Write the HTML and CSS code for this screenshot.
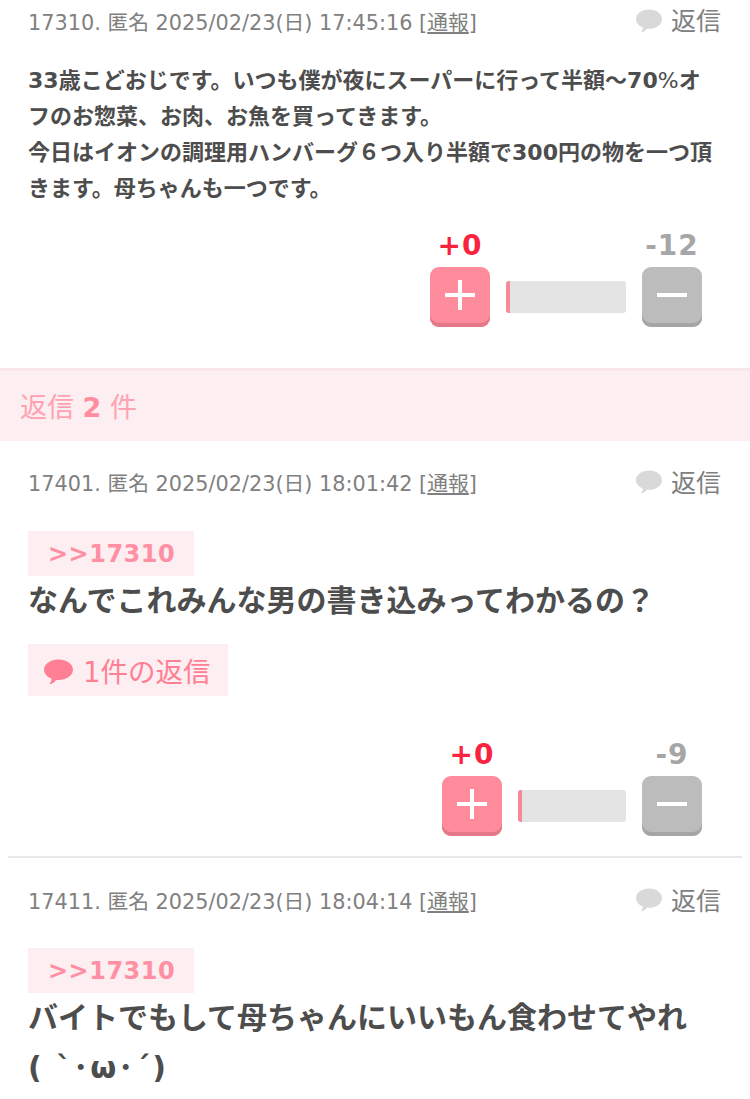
FILE: index.html
```html
<!DOCTYPE html>
<html lang="ja">
<head>
<meta charset="utf-8">
<title>コメント</title>
<link rel="stylesheet" href="styles.css">
</head>
<body>
<article class="post post-first">
  <header class="head">
    <div class="meta">17310. 匿名 2025/02/23(日) 17:45:16 [<a class="report">通報</a>]</div>
    <div class="reply-link"><svg class="bubble" viewBox="0 0 26 24"><path fill="#d9d9d9" d="M13 0.5C20.2 0.5 26 4.7 26 10.2C26 15.6 20.2 19.8 13 19.8C12.2 19.8 11.6 19.8 10.9 19.7C9.6 21.6 7.4 23 4.8 23.4C6.2 21.8 6.9 20.1 6.7 18.5C2.7 16.8 0 13.7 0 10.2C0 4.7 5.8 0.5 13 0.5Z"/></svg><span>返信</span></div>
  </header>
  <p class="body body-small"><b>33</b>歳こどおじです。いつも僕が夜にスーパーに行って半額〜<b>70</b><span class="thin">%</span>オフのお惣菜、お肉、お魚を買ってきます。<br>今日はイオンの調理用ハンバーグ６つ入り半額で<b>300</b>円の物を一つ頂きます。母ちゃんも一つです。</p>
  <div class="votes votes-first">
    <div class="vote"><span class="count count-plus">+0</span><button class="btn btn-plus"><span class="sign sign-plus"></span></button></div>
    <div class="bar"><span class="bar-fill"></span></div>
    <div class="vote"><span class="count count-minus">-12</span><button class="btn btn-minus"><span class="sign"></span></button></div>
  </div>
</article>
<div class="reply-count">返信 <b>2</b> 件</div>
<article class="post post-divided">
  <header class="head">
    <div class="meta">17401. 匿名 2025/02/23(日) 18:01:42 [<a class="report">通報</a>]</div>
    <div class="reply-link"><svg class="bubble" viewBox="0 0 26 24"><path fill="#d9d9d9" d="M13 0.5C20.2 0.5 26 4.7 26 10.2C26 15.6 20.2 19.8 13 19.8C12.2 19.8 11.6 19.8 10.9 19.7C9.6 21.6 7.4 23 4.8 23.4C6.2 21.8 6.9 20.1 6.7 18.5C2.7 16.8 0 13.7 0 10.2C0 4.7 5.8 0.5 13 0.5Z"/></svg><span>返信</span></div>
  </header>
  <a class="anchor">&gt;&gt;17310</a>
  <p class="body body-large">なんでこれみんな男の書き込みってわかるの？</p>
  <a class="replies"><svg class="bubble-pink" viewBox="0 0 29 26"><path fill="#ff8094" d="M14.5 0.5C22.5 0.5 29 5 29 10.8C29 16.6 22.5 21 14.5 21C13.6 21 12.8 21 12 20.9C10.6 23.3 8.2 24.8 5.3 25.3C6.9 23.5 7.6 21.6 7.4 19.6C3 17.8 0 14.6 0 10.8C0 5 6.5 0.5 14.5 0.5Z"/></svg><span>1件の返信</span></a>
  <div class="votes votes-second">
    <div class="vote"><span class="count count-plus">+0</span><button class="btn btn-plus"><span class="sign sign-plus"></span></button></div>
    <div class="bar bar-short"><span class="bar-fill"></span></div>
    <div class="vote"><span class="count count-minus">-9</span><button class="btn btn-minus"><span class="sign"></span></button></div>
  </div>
</article>
<article class="post post-last">
  <header class="head">
    <div class="meta">17411. 匿名 2025/02/23(日) 18:04:14 [<a class="report">通報</a>]</div>
    <div class="reply-link"><svg class="bubble" viewBox="0 0 26 24"><path fill="#d9d9d9" d="M13 0.5C20.2 0.5 26 4.7 26 10.2C26 15.6 20.2 19.8 13 19.8C12.2 19.8 11.6 19.8 10.9 19.7C9.6 21.6 7.4 23 4.8 23.4C6.2 21.8 6.9 20.1 6.7 18.5C2.7 16.8 0 13.7 0 10.2C0 4.7 5.8 0.5 13 0.5Z"/></svg><span>返信</span></div>
  </header>
  <a class="anchor">&gt;&gt;17310</a>
  <p class="body body-large">バイトでもして母ちゃんにいいもん食わせてやれ<br><span class="kaomoji">( `･ω･´)</span></p>
</article>
</body>
</html>
```
FILE: styles.css
```css
* { box-sizing: border-box; }
html, body { margin: 0; padding: 0; overflow: hidden; height: 1099px; }
body {
  width: 750px;
  background: #fff;
  color: #4d4d4d;
  font-family: "DejaVu Sans", "Noto Sans CJK JP", sans-serif;
}
.post { padding: 0 28px; }
.post-first { height: 368px; }
.post-divided { padding: 25px 20px 0; margin: 0 8px; height: 417px; border-bottom: 2px solid #e8e8e8; }
.post-last { padding-top: 26px; }
.head { display: flex; justify-content: space-between; align-items: center; height: 32px; }
.post-first .head { height: 41px; }
.meta { font-size: 20.8px; color: #808080; white-space: nowrap; }
.report { color: #808080; text-decoration: underline; }
.reply-link { display: flex; align-items: center; gap: 9px; font-size: 25px; color: #808080; padding-right: 1px; margin-top: -3px; }
.bubble { width: 26px; height: 24px; display: block; margin-top: 3px; }
.body { margin: 0; font-weight: 700; }
.thin { font-weight: 400; }
.kaomoji { letter-spacing: 2px; }
.body-small { font-size: 22px; line-height: 36px; margin-top: 22px; }
.body-large { font-size: 30px; line-height: 50px; }
.anchor {
  display: block; width: 166px; height: 45px; margin-top: 33px;
  background: #fdeef1; color: #ff8fa3; font-size: 24px; font-weight: 700;
  line-height: 46px; padding-left: 20px; letter-spacing: 0.5px;
}
.post-last .anchor { margin-top: 32px; }
.replies {
  display: flex; align-items: center; gap: 10px; width: 200px; height: 52px;
  margin-top: 18px; padding: 0 0 0 16px; background: #fdeef1; color: #ff8094; font-size: 27.5px;
}
.bubble-pink { width: 29px; height: 26px; display: block; margin-top: 4px; }
.votes { display: flex; justify-content: flex-end; align-items: flex-end; padding-right: 20px; }
.post-divided .votes { padding-right: 20px; }
.votes-first { margin-top: 20px; }
.votes-second { margin-top: 40px; }
.vote { display: flex; flex-direction: column; align-items: center; width: 60px; }
.count { font-size: 28px; font-weight: 700; line-height: 38px; height: 36px; white-space: nowrap; margin-bottom: 4px; letter-spacing: 1px; }
.count-plus { color: #f8243f; }
.count-minus { color: #a6a6a6; }
.btn {
  width: 60px; height: 60px; border: 0; padding: 0; border-radius: 9px;
  display: flex; align-items: center; justify-content: center;
}
.btn-plus { background: #ff8c9c; box-shadow: inset 0 -4px 0 #e57888; }
.btn-minus { background: #bcbcbc; box-shadow: inset 0 -4px 0 #a5a5a5; }
.sign { display: block; width: 30px; height: 4px; background: #fff; position: relative; top: -2px; }
.sign-plus::after { content: ""; position: absolute; left: 13px; top: -13px; width: 4px; height: 30px; background: #fff; }
.bar { width: 120px; height: 32px; margin: 0 16px 14px; background: #e4e4e4; border-radius: 3px; overflow: hidden; }
.bar-short { width: 108px; }
.bar-fill { display: block; width: 4px; height: 100%; background: #f58b98; }
.reply-count {
  height: 73px; background: #fdeef1; border-top: 3px solid #f9e6e9;
  padding-left: 20px; line-height: 74px; font-size: 27px; color: #ffa3b3;
}
.reply-count b { color: #ff8c9f; }
```
